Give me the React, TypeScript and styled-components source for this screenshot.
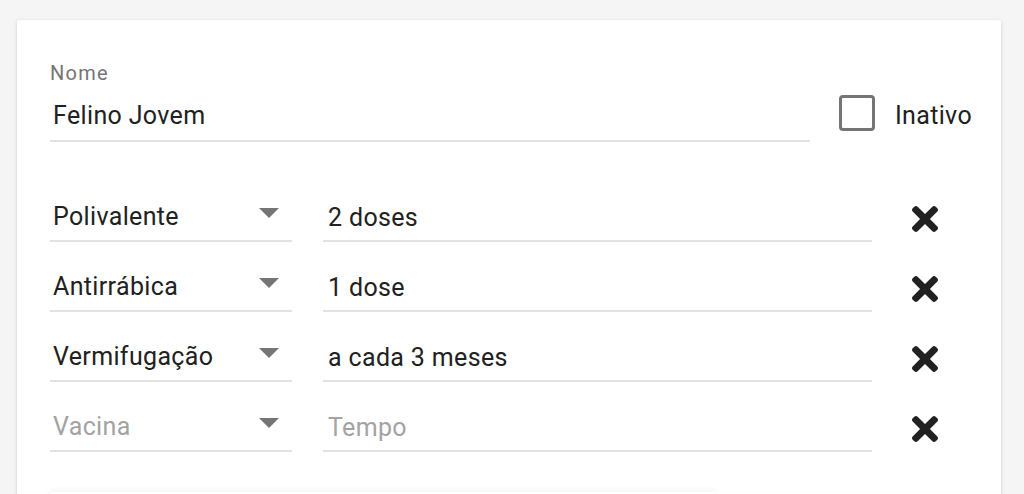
import React from 'react';
import styled, { createGlobalStyle } from 'styled-components';

const GlobalStyle = createGlobalStyle`
  html, body {
    margin: 0;
    padding: 0;
    height: 100%;
    overflow: hidden;
    background: #f5f5f5;
    font-family: Roboto, "Liberation Sans", Arial, sans-serif;
  }
`;

interface Dose {
  vacina: string;
  tempo: string;
}

const doses: Dose[] = [
  { vacina: 'Polivalente', tempo: '2 doses' },
  { vacina: 'Antirrábica', tempo: '1 dose' },
  { vacina: 'Vermifugação', tempo: 'a cada 3 meses' },
  { vacina: '', tempo: '' },
];

const Card = styled.div`
  margin: 20px 23px 0 17px;
  height: 560px;
  box-sizing: border-box;
  padding: 42px 29px 0 33px;
  background: #fff;
  border-radius: 2px;
  box-shadow: 0 1px 4px rgba(0, 0, 0, 0.12), 0 1px 2px rgba(0, 0, 0, 0.08);
`;

const HeaderRow = styled.div`
  display: flex;
  align-items: flex-end;
`;

const NameField = styled.div`
  width: 761px;
  display: flex;
  flex-direction: column;
`;

const FloatingLabel = styled.label`
  font-size: 20px;
  line-height: 22px;
  letter-spacing: 1.3px;
  color: #757575;
  margin-bottom: 16px;
`;

const TextInput = styled.input<{ $indent?: number }>`
  display: block;
  width: 100%;
  box-sizing: border-box;
  height: 42px;
  margin: 0;
  padding: 0 0 10px ${(p) => p.$indent ?? 3}px;
  border: none;
  border-bottom: 2px solid #e2e2e2;
  outline: none;
  background: transparent;
  font-family: inherit;
  font-size: 25px;
  line-height: 30px;
  letter-spacing: 0.35px;
  color: #212121;

  &::placeholder {
    color: #a3a3a3;
  }
`;

const RowInput = styled(TextInput)`
  height: 40px;
  padding-bottom: 8px;
`;

const CheckGroup = styled.label`
  display: flex;
  align-items: flex-end;
  margin-left: 29px;
  padding-bottom: 11px;
`;

const CheckBox = styled.span`
  display: block;
  width: 36px;
  height: 36px;
  box-sizing: border-box;
  border: 3px solid #757575;
  border-radius: 4px;
`;

const CheckText = styled.span`
  margin-left: 20px;
  font-size: 25px;
  line-height: 30px;
  letter-spacing: 0.35px;
  color: #212121;
`;

const DoseList = styled.div`
  margin-top: 60px;
  display: flex;
  flex-direction: column;
  gap: 30px;
`;

const DoseRow = styled.div`
  display: grid;
  grid-template-columns: 242px 549px 44px;
  column-gap: 31px;
  align-items: start;
`;

const Select = styled.div<{ $empty: boolean }>`
  display: flex;
  justify-content: space-between;
  align-items: flex-start;
  height: 40px;
  box-sizing: border-box;
  padding: 0 13px 8px 3px;
  border-bottom: 2px solid #e2e2e2;
  font-size: 25px;
  line-height: 30px;
  letter-spacing: 0.35px;
  color: ${(p) => (p.$empty ? '#a3a3a3' : '#212121')};
`;

const Arrow = styled.span`
  margin-top: 6px;
  width: 0;
  height: 0;
  border-left: 10px solid transparent;
  border-right: 10px solid transparent;
  border-top: 10px solid #757575;
`;

const RemoveButton = styled.button`
  display: flex;
  align-items: center;
  justify-content: center;
  width: 100%;
  height: 33px;
  padding: 0;
  border: none;
  background: transparent;
  color: #212121;
  cursor: pointer;

  svg {
    width: 26px;
    height: 26px;
  }
`;

const NextPanel = styled.div`
  margin-top: 40px;
  width: 665px;
  height: 60px;
  background: #fff;
  box-shadow: 0 -2px 6px rgba(0, 0, 0, 0.05);
`;

const TimesIcon = () => (
  <svg viewBox="0 80 352 352" fill="currentColor" aria-hidden="true">
    <path d="M242.72 256l100.07-100.07c12.28-12.28 12.28-32.19 0-44.48l-22.24-22.24c-12.28-12.28-32.19-12.28-44.48 0L176 189.28 75.93 89.21c-12.28-12.28-32.19-12.28-44.48 0L9.21 111.45c-12.28 12.28-12.28 32.19 0 44.48L109.28 256 9.21 356.07c-12.28 12.28-12.28 32.19 0 44.48l22.24 22.24c12.28 12.28 32.2 12.28 44.48 0L176 322.72l100.07 100.07c12.28 12.28 32.2 12.28 44.48 0l22.24-22.24c12.28-12.28 12.28-32.19 0-44.48L242.72 256z" />
  </svg>
);

const App = () => (
  <>
    <GlobalStyle />
    <Card>
      <HeaderRow>
        <NameField>
          <FloatingLabel>Nome</FloatingLabel>
          <TextInput defaultValue="Felino Jovem" readOnly />
        </NameField>
        <CheckGroup>
          <CheckBox />
          <CheckText>Inativo</CheckText>
        </CheckGroup>
      </HeaderRow>

      <DoseList>
        {doses.map((d, i) => (
          <DoseRow key={i}>
            <Select $empty={!d.vacina}>
              <span>{d.vacina || 'Vacina'}</span>
              <Arrow />
            </Select>
            <RowInput $indent={5} defaultValue={d.tempo} placeholder="Tempo" readOnly />
            <RemoveButton aria-label="Remover">
              <TimesIcon />
            </RemoveButton>
          </DoseRow>
        ))}
      </DoseList>

      <NextPanel />
    </Card>
  </>
);

export default App;
